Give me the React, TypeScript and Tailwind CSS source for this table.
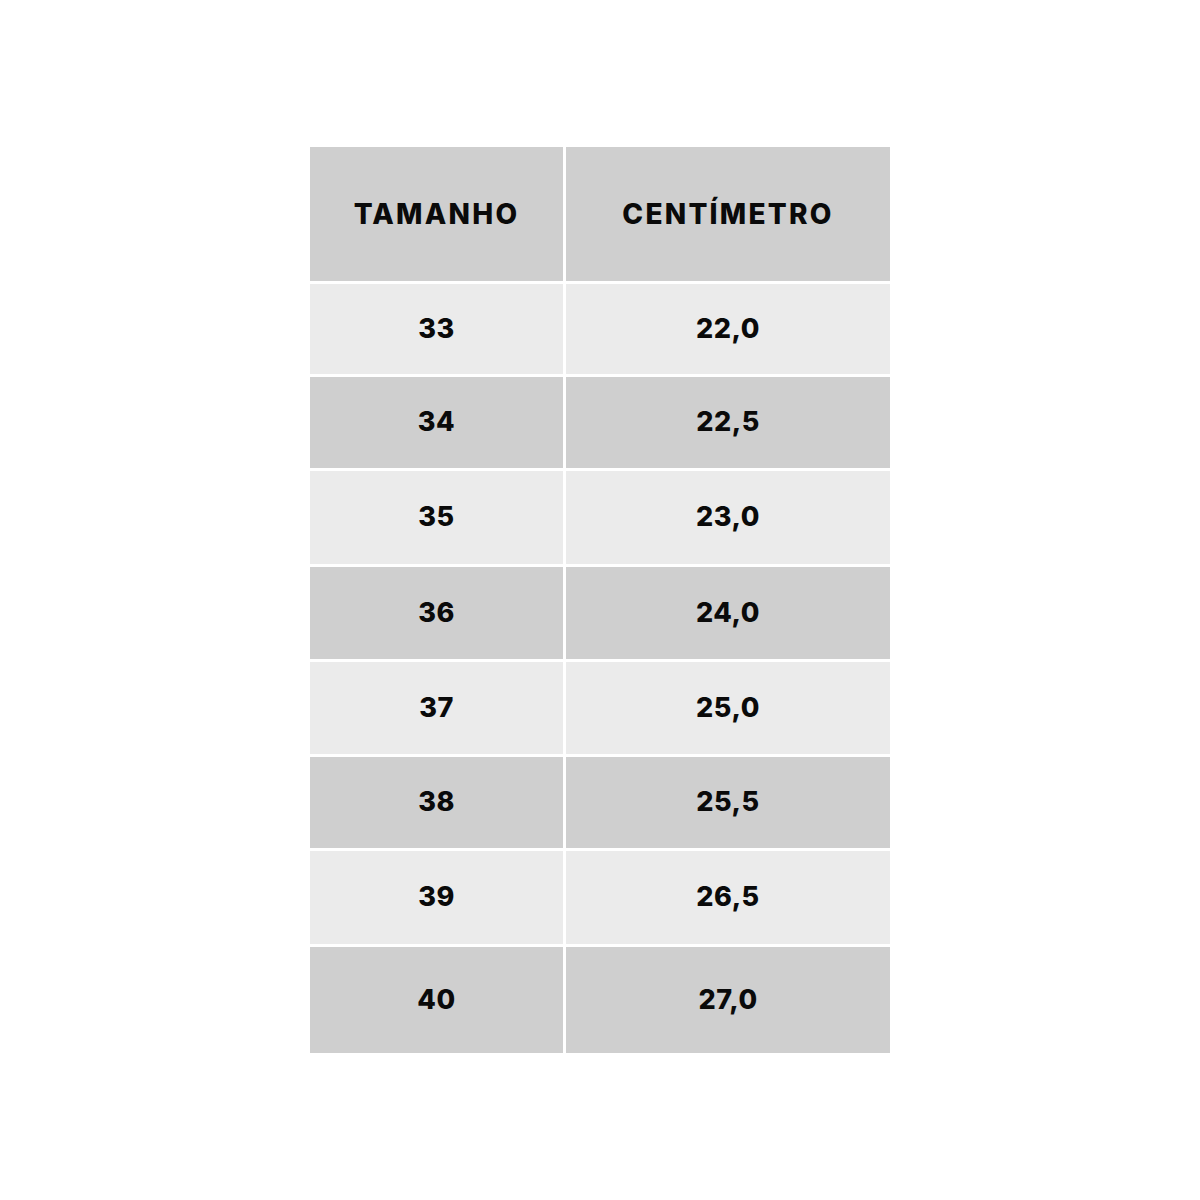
const rows: [string, string, string][] = [
  ['33', '22,0', 'h-[90px] bg-[#ebebeb]'],
  ['34', '22,5', 'h-[91px] bg-[#cfcfcf]'],
  ['35', '23,0', 'h-[93px] bg-[#ebebeb]'],
  ['36', '24,0', 'h-[92px] bg-[#cfcfcf]'],
  ['37', '25,0', 'h-[92px] bg-[#ebebeb]'],
  ['38', '25,5', 'h-[91px] bg-[#cfcfcf]'],
  ['39', '26,5', 'h-[93px] bg-[#ebebeb]'],
  ['40', '27,0', 'h-[106px] bg-[#cfcfcf]'],
]

export default function App() {
  return (
    <div className="min-h-[1200px] w-full bg-white pt-[147px] font-['Inter',sans-serif] text-[#0a0a0a]">
      <div className="mx-auto grid w-[580px] grid-cols-[253px_324px] gap-[3px]">
        <div className="flex h-[134px] items-center justify-center bg-[#cfcfcf] text-[28px] font-extrabold tracking-[0.08em]">
          TAMANHO
        </div>
        <div className="flex h-[134px] items-center justify-center bg-[#cfcfcf] text-[28px] font-extrabold tracking-[0.08em]">
          CENTÍMETRO
        </div>
        {rows.map(([size, cm, cls]) => (
          <div key={size} className="contents">
            <div className={`flex items-center justify-center text-[27px] font-extrabold tracking-[0.02em] ${cls}`}>{size}</div>
            <div className={`flex items-center justify-center text-[27px] font-extrabold tracking-[0.02em] ${cls}`}>{cm}</div>
          </div>
        ))}
      </div>
    </div>
  )
}
